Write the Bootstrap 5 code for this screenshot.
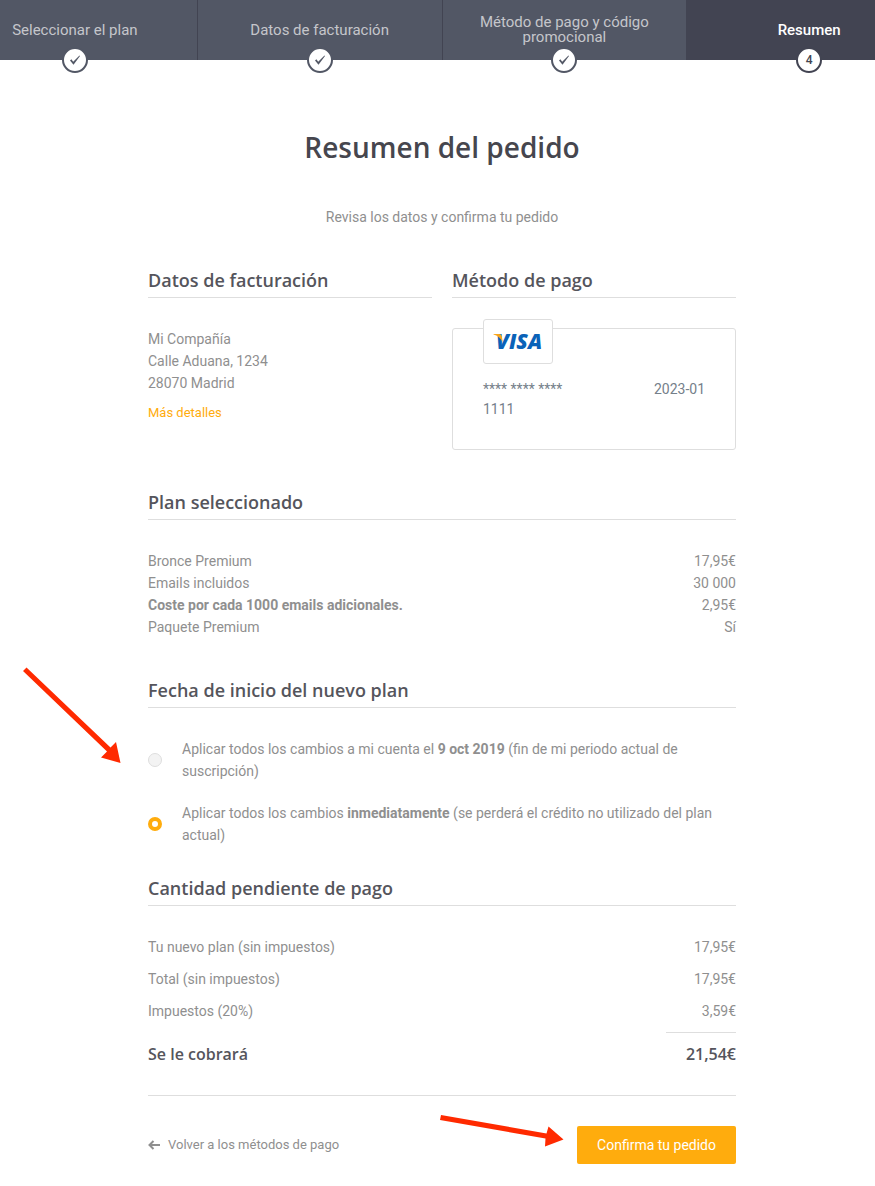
<!DOCTYPE html>
<html lang="es">
<head>
<meta charset="utf-8">
<meta name="viewport" content="width=device-width, initial-scale=1">
<title>Resumen del pedido</title>
<link href="https://cdn.jsdelivr.net/npm/bootstrap@5.3.0/dist/css/bootstrap.min.css" rel="stylesheet">
<style>
  :root { --ink: #55555c; --soft: #8f8f8f; --line: #dedede; --amber: #ffac0d; --slate: #525765; --night: #424452; }
  body { font-family: Roboto, sans-serif; font-size: 14px; line-height: 22px; color: var(--soft); background: #fff; }
  a { color: inherit; text-decoration: none; }
  h1, h2 { font-family: "Open Sans", sans-serif; font-weight: 600; }
  h1 { font-size: 28px; line-height: 36px; color: #46464e; }
  h2 { font-size: 18px; line-height: 24px; color: var(--ink); padding-bottom: 5px; border-bottom: 1px solid var(--line); }
  strong { font-weight: 700; }

  /* the step bar runs past both sides of the window */
  .steps { height: 60px; margin: 0 -56px 0 -47px; background: var(--slate); }
  .step { flex: 1 1 0; font-size: 15px; line-height: 15px; color: #c5c6cb; border-left: 1px solid var(--night); }
  .step:first-child { border-left: 0; }
  .step.active { background: var(--night); color: #fff; font-weight: 500; }
  .step-dot { width: 26px; height: 26px; border: 2px solid var(--slate); border-radius: 50%; background: #fff; color: var(--slate); top: 47px; font-size: 12px; }
  .step.active .step-dot { border-color: var(--night); color: var(--night); }

  .sheet { margin: 0 -57px 0 -48px; }
  .order { max-width: 588px; padding: 69px 0 22px; }
  .intro { margin-top: 41px; }
  .columns { column-gap: 20px; margin-top: 40px; }
  .columns > section { flex: 1 1 0; }
  .block-gap { margin-top: 40px; }
  .block-body { padding-top: 30px; }
  .more { font-size: 13px; color: var(--amber); margin-top: 8px; }
  .pay-card { margin-top: 30px; min-height: 122px; padding: 50px 30px 0; border: 1px solid var(--line); border-radius: 3px; line-height: 20px; color: #75808a; }
  .pay-brand { top: -10px; left: 30px; width: 70px; height: 45px; border: 1px solid var(--line); border-radius: 3px; background: #fff; }
  .pay-number { width: 100px; }

  .choices { padding-bottom: 10px; }
  .choice { column-gap: 20px; margin-bottom: 20px; }
  .form-check-input.choice-dot { flex: none; width: 14px; height: 14px; margin: 0; background: #f3f3f3; border: 1px solid #dedede; box-shadow: none; }
  .form-check-input.choice-dot:checked { background: #fff; border: 4px solid var(--amber); }
  .totals { row-gap: 10px; }
  .due { font: 600 16px/24px "Open Sans", sans-serif; color: var(--ink); margin-top: 9px; }
  .due-rule { width: 70px; height: 1px; background: var(--line); margin-top: 10px; }
  .actions { margin-top: 29px; padding-top: 30px; border-top: 1px solid var(--line); }
  .back-link { font-size: 13px; }
  .btn.confirm { background: var(--amber); color: #fff; border: 0; border-radius: 2px; font-size: 14px; line-height: 22px; padding: 8px 20px; }

  .pointer-a { left: -126px; top: -42px; }
  .pointer-b { left: 290px; top: 16px; }
</style>
</head>
<body>
<div class="overflow-hidden">
<header class="steps d-flex">
  <div class="step position-relative d-flex align-items-center justify-content-center text-center px-4">
    <span>Seleccionar el plan</span>
    <span class="step-dot position-absolute start-50 translate-middle-x d-flex align-items-center justify-content-center"><svg width="12" height="12" viewBox="0 0 12 12" aria-hidden="true"><path d="M1 6.6 2.4 5.3 4.2 7.8 10.5 1.6 11 2.1 4.5 10.8Z" fill="currentColor"/></svg></span>
  </div>
  <div class="step position-relative d-flex align-items-center justify-content-center text-center px-4">
    <span>Datos de facturación</span>
    <span class="step-dot position-absolute start-50 translate-middle-x d-flex align-items-center justify-content-center"><svg width="12" height="12" viewBox="0 0 12 12" aria-hidden="true"><path d="M1 6.6 2.4 5.3 4.2 7.8 10.5 1.6 11 2.1 4.5 10.8Z" fill="currentColor"/></svg></span>
  </div>
  <div class="step position-relative d-flex align-items-center justify-content-center text-center px-4">
    <span>Método de pago y código promocional</span>
    <span class="step-dot position-absolute start-50 translate-middle-x d-flex align-items-center justify-content-center"><svg width="12" height="12" viewBox="0 0 12 12" aria-hidden="true"><path d="M1 6.6 2.4 5.3 4.2 7.8 10.5 1.6 11 2.1 4.5 10.8Z" fill="currentColor"/></svg></span>
  </div>
  <div class="step active position-relative d-flex align-items-center justify-content-center text-center px-4" aria-current="step">
    <span>Resumen</span>
    <span class="step-dot position-absolute start-50 translate-middle-x d-flex align-items-center justify-content-center">4</span>
  </div>
</header>

<div class="sheet">
<main class="order mx-auto">
  <h1 class="text-center mb-0">Resumen del pedido</h1>
  <p class="intro text-center mb-0">Revisa los datos y confirma tu pedido</p>

  <div class="columns d-flex">
    <section>
      <h2 class="mb-0">Datos de facturación</h2>
      <div class="block-body">
        <div>Mi Compañía</div>
        <div>Calle Aduana, 1234</div>
        <div>28070 Madrid</div>
        <a href="#" class="more d-inline-block">Más detalles</a>
      </div>
    </section>
    <section>
      <h2 class="mb-0">Método de pago</h2>
      <div class="pay-card position-relative d-flex justify-content-between">
        <div class="pay-brand position-absolute d-flex align-items-center justify-content-center">
          <svg width="60" height="32" viewBox="0 0 60 32" role="img" aria-label="VISA">
            <text x="8" y="23" font-family="Open Sans, sans-serif" font-size="21" font-weight="800" font-style="italic" fill="#0a62b8">VISA</text>
            <path d="M5.500 8H11q2.300 0 2.700 2l1 6Q11.500 10 5.500 8.500Z" fill="#f9a51a"/>
          </svg>
        </div>
        <span class="pay-number">**** **** **** 1111</span>
        <span>2023-01</span>
      </div>
    </section>
  </div>

  <section class="block-gap">
    <h2 class="mb-0">Plan seleccionado</h2>
    <div class="block-body">
      <div class="d-flex justify-content-between"><span>Bronce Premium</span><span>17,95€</span></div>
      <div class="d-flex justify-content-between"><span>Emails incluidos</span><span>30 000</span></div>
      <div class="d-flex justify-content-between"><strong>Coste por cada 1000 emails adicionales.</strong><span>2,95€</span></div>
      <div class="d-flex justify-content-between"><span>Paquete Premium</span><span>Sí</span></div>
    </div>
  </section>

  <section class="block-gap">
    <h2 class="mb-0">Fecha de inicio del nuevo plan</h2>
    <div class="block-body choices position-relative">
      <div class="choice d-flex align-items-center">
        <input class="form-check-input choice-dot" type="radio" name="start" id="start-later">
        <label for="start-later">Aplicar todos los cambios a mi cuenta el <strong>9 oct 2019</strong> (fin de mi periodo actual de suscripción)</label>
      </div>
      <div class="choice d-flex align-items-center">
        <input class="form-check-input choice-dot" type="radio" name="start" id="start-now" checked>
        <label for="start-now">Aplicar todos los cambios <strong>inmediatamente</strong> (se perderá el crédito no utilizado del plan actual)</label>
      </div>
      <svg class="pointer-a position-absolute" width="100" height="100" viewBox="0 0 100 100" aria-hidden="true"><path d="M4.500 1.500 88.500 81.500 94 76 98.500 97 79 91.500 85 85.500 1 5Z" fill="#ff2a00"/></svg>
    </div>
  </section>

  <section>
    <h2 class="mb-0">Cantidad pendiente de pago</h2>
    <div class="block-body totals d-flex flex-column">
      <div class="d-flex justify-content-between"><span>Tu nuevo plan (sin impuestos)</span><span>17,95€</span></div>
      <div class="d-flex justify-content-between"><span>Total (sin impuestos)</span><span>17,95€</span></div>
      <div class="d-flex justify-content-between"><span>Impuestos (20%)</span><span>3,59€</span></div>
    </div>
    <div class="due-rule ms-auto"></div>
    <div class="due d-flex justify-content-between"><span>Se le cobrará</span><span>21,54€</span></div>
  </section>

  <div class="actions position-relative d-flex align-items-center justify-content-between">
    <a href="#" class="back-link d-flex align-items-center gap-2"><svg width="12" height="10" viewBox="0 0 12 10" fill="none" stroke="currentColor" stroke-width="2" aria-hidden="true"><path d="M12 5H2M5.500 1 1.500 5l4 4"/></svg>Volver a los métodos de pago</a>
    <button type="button" class="btn confirm">Confirma tu pedido</button>
    <svg class="pointer-b position-absolute" width="130" height="40" viewBox="0 0 130 40" aria-hidden="true"><path d="M3 3 108.500 21.500 110.500 14.500 125.500 27.500 107 34.500 107.500 26.500 2 8Z" fill="#ff2a00"/></svg>
  </div>
</main>
</div>
</div>
<script src="https://cdn.jsdelivr.net/npm/bootstrap@5.3.0/dist/js/bootstrap.bundle.min.js"></script>
</body>
</html>
